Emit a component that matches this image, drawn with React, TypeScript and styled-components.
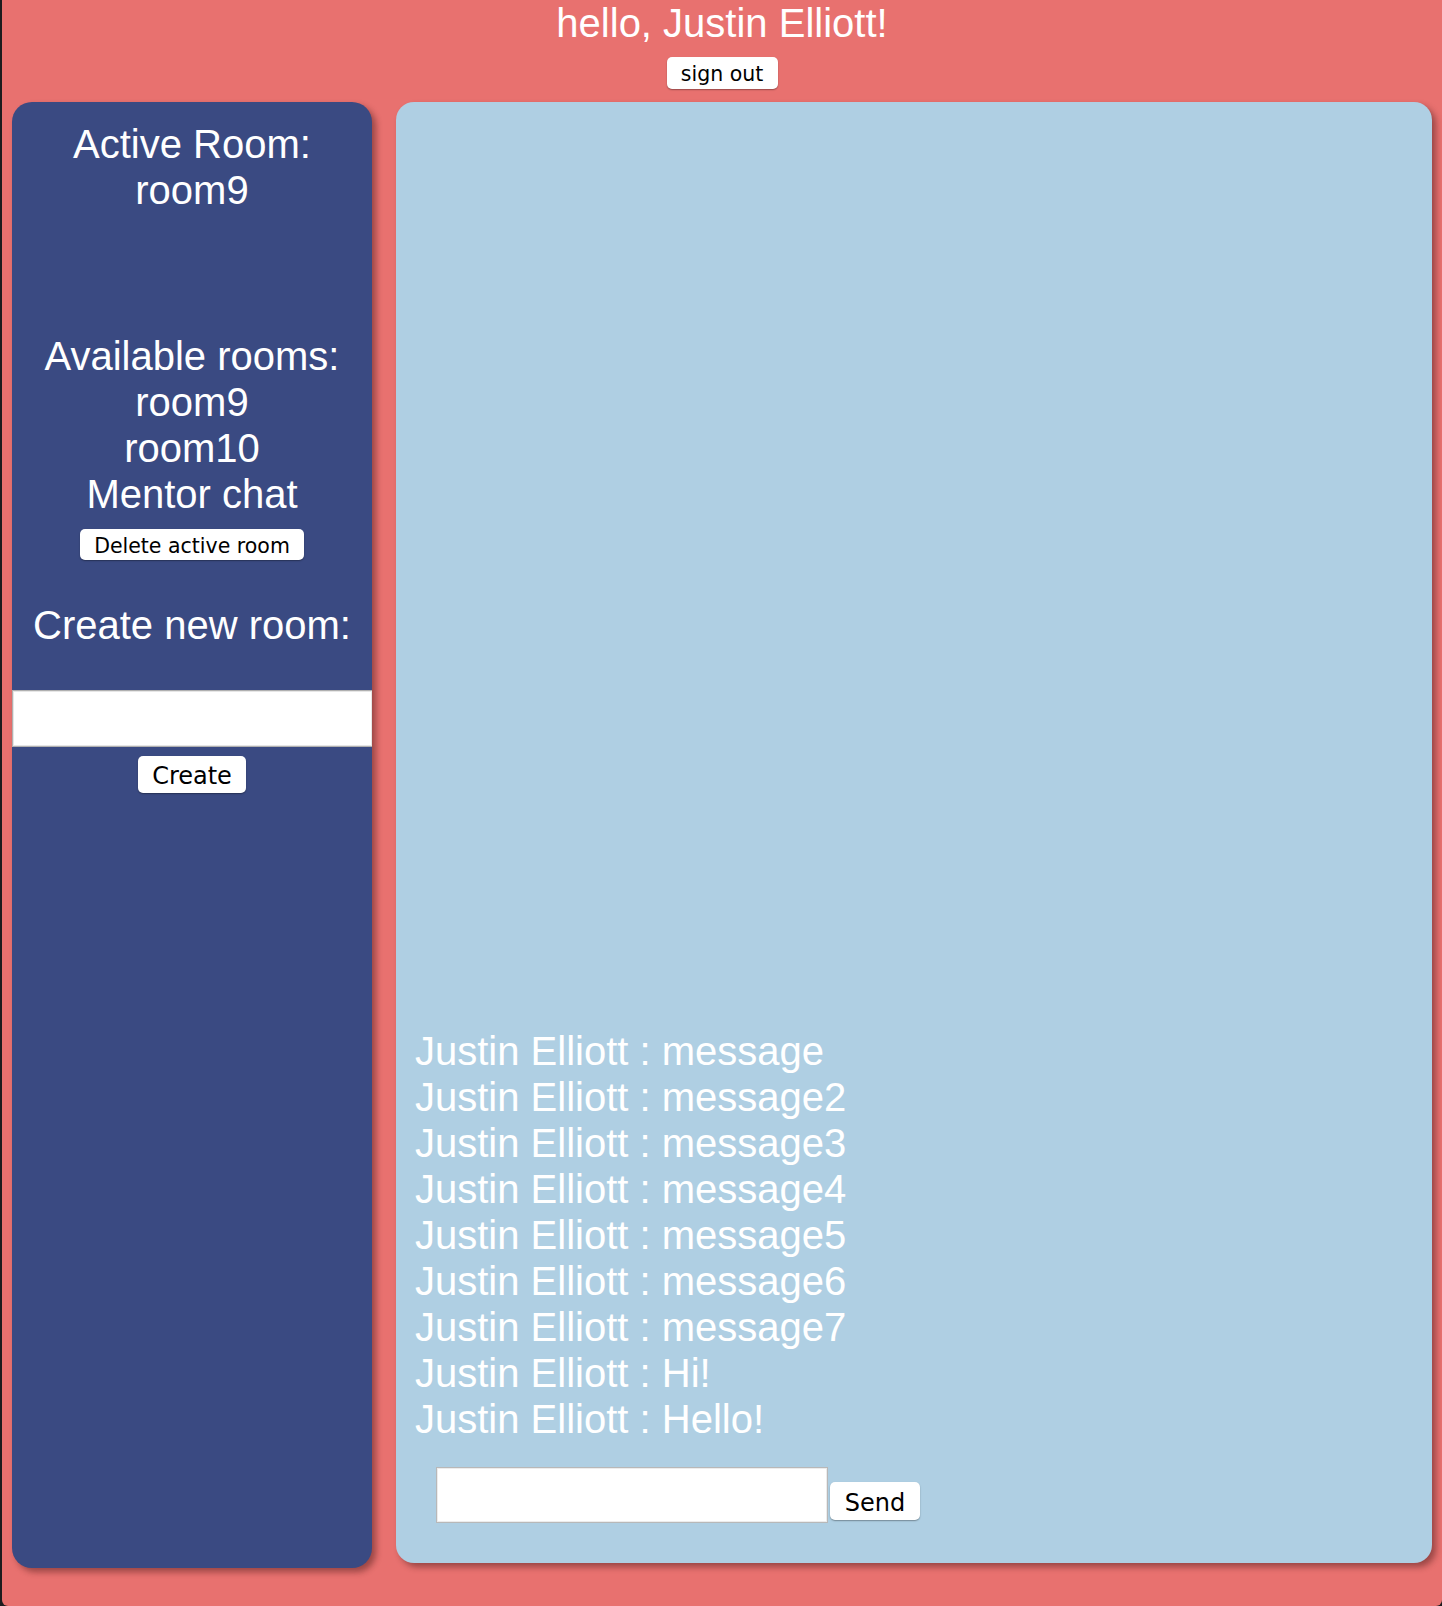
import React from "react";
import styled, { createGlobalStyle } from "styled-components";

const GlobalStyle = createGlobalStyle`
  html, body {
    margin: 0;
    padding: 0;
    background: #1c1c1e;
  }
  * { box-sizing: border-box; }
`;

const Page = styled.div`
  margin-left: 2px;
  width: 1440px;
  height: 1606px;
  background: #e8716f;
  border-radius: 0 0 6px 6px;
  font-family: "Liberation Sans", Arial, Helvetica, sans-serif;
  color: #fff;
  display: flex;
  flex-direction: column;
  align-items: center;
  overflow: hidden;
`;

const Greeting = styled.h1`
  margin: 0;
  font-size: 40px;
  font-weight: normal;
  line-height: 46px;
`;

const Button = styled.button<{ $size?: "sm" | "lg" }>`
  font-family: "DejaVu Sans", "Liberation Sans", sans-serif;
  font-size: ${(p) => (p.$size === "lg" ? "24px" : "20.5px")};
  height: ${(p) => (p.$size === "lg" ? "37px" : "31px")};
  padding: 3px ${(p) => (p.$size === "lg" ? "12px" : "10px")} 0;
  line-height: 1;
  color: #000;
  background: #fff;
  border: none;
  border-radius: 5px;
  box-shadow: 0 1px 1.5px rgba(0, 0, 0, 0.35);
  cursor: pointer;
  white-space: nowrap;
`;

const SignOut = styled(Button)`
  margin-top: 11px;
  height: 32px;
  width: 111px;
`;

const Panels = styled.div`
  margin-top: 13px;
  width: 100%;
  padding: 0 8px 0 10px;
  display: flex;
  align-items: flex-start;
  gap: 24px;
`;

const Sidebar = styled.aside`
  flex: 0 0 360px;
  height: 1466px;
  background: #3a4a82;
  border-radius: 20px;
  box-shadow: 4px 4px 6px rgba(60, 20, 20, 0.45);
  padding-top: 19px;
  display: flex;
  flex-direction: column;
  align-items: center;
  text-align: center;
`;

const SideText = styled.div<{ $gap?: number }>`
  font-size: 40px;
  line-height: 46px;
  margin-top: ${(p) => p.$gap ?? 0}px;
`;

const DeleteButton = styled(Button)`
  margin-top: 12px;
  width: 224px;
`;

const RoomInput = styled.input`
  margin-top: 42px;
  width: 100%;
  height: 57px;
  border: 1px solid #b0b0b0;
  border-right: none;
  box-shadow: inset 0 0 0 1px #e6e6e6;
  background: #fff;
  outline: none;
`;

const CreateButton = styled(Button)`
  margin-top: 9px;
  width: 108px;
`;

const ChatPanel = styled.main`
  flex: 0 0 1036px;
  height: 1461px;
  background: #afcfe3;
  border-radius: 18px;
  box-shadow: 4px 4px 6px rgba(60, 20, 20, 0.45);
  padding: 0 20px 40px 19px;
  display: flex;
  flex-direction: column;
  justify-content: flex-end;
`;

const MessageList = styled.div`
  display: flex;
  flex-direction: column;
`;

const Message = styled.div`
  font-size: 40px;
  line-height: 46px;
  color: #fff;
  white-space: nowrap;
`;

const Composer = styled.form`
  margin-top: 25px;
  margin-left: 21px;
  display: flex;
  align-items: flex-end;
  gap: 2px;
`;

const MessageInput = styled.input`
  width: 392px;
  height: 56px;
  border: 1px solid #b8b8b8;
  box-shadow: inset 0 0 0 1px #ececec;
  background: #fff;
  outline: none;
`;

const SendButton = styled(Button)`
  width: 90px;
  height: 38px;
  margin-bottom: 3px;
`;

const messages = [
  "message",
  "message2",
  "message3",
  "message4",
  "message5",
  "message6",
  "message7",
  "Hi!",
  "Hello!",
];

const rooms = ["room9", "room10", "Mentor chat"];

export default function App() {
  return (
    <>
      <GlobalStyle />
      <Page>
        <Greeting>hello, Justin Elliott!</Greeting>
        <SignOut type="button">sign out</SignOut>
        <Panels>
          <Sidebar>
            <SideText>Active Room:</SideText>
            <SideText>room9</SideText>
            <SideText $gap={120}>Available rooms:</SideText>
            {rooms.map((r) => (
              <SideText key={r}>{r}</SideText>
            ))}
            <DeleteButton type="button">Delete active room</DeleteButton>
            <SideText $gap={42}>Create new room:</SideText>
            <RoomInput type="text" />
            <CreateButton type="button" $size="lg">
              Create
            </CreateButton>
          </Sidebar>
          <ChatPanel>
            <MessageList>
              {messages.map((m, i) => (
                <Message key={i}>Justin Elliott : {m}</Message>
              ))}
            </MessageList>
            <Composer onSubmit={(e) => e.preventDefault()}>
              <MessageInput type="text" />
              <SendButton type="submit" $size="lg">
                Send
              </SendButton>
            </Composer>
          </ChatPanel>
        </Panels>
      </Page>
    </>
  );
}
